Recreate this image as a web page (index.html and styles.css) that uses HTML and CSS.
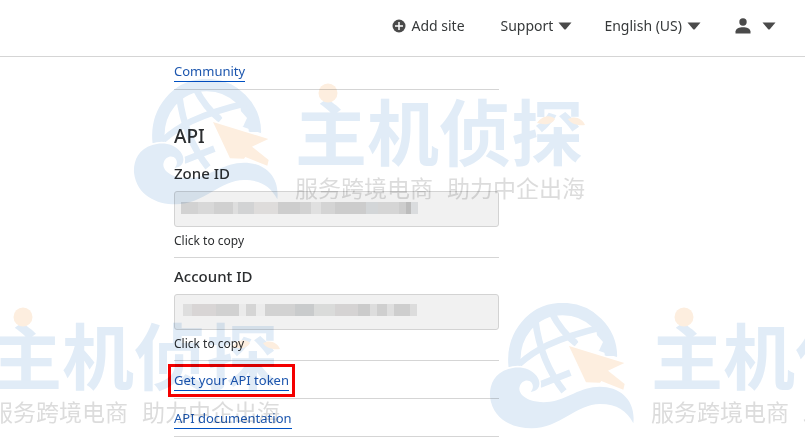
FILE: index.html
```html
<!DOCTYPE html>
<html lang="en">
<head>
<meta charset="utf-8">
<meta name="viewport" content="width=device-width, initial-scale=1">
<title>API</title>
<link rel="stylesheet" href="styles.css">
</head>
<body>
<svg class="defs" aria-hidden="true">
  <symbol id="caret" viewBox="0 0 14 8"><path d="M0.5 0.5H13.5L7.8 7.2Q7 8 6.2 7.2Z" fill="#4a4a4a"/></symbol>
  <symbol id="globe" viewBox="27 39 444 384">
    <g fill="none" stroke="#e1ecf7">
      <path d="M104 230C94 136 158 57 248 57C330 57 392 122 393 198" stroke-width="37"/>
      <path d="M118 222C160 184 220 146 365 112" stroke-width="19"/>
      <path d="M166 92C176 170 206 246 252 304" stroke-width="20"/>
      <path d="M215 68C236 110 258 136 290 162" stroke-width="20"/>
      <path d="M180 284L271 248" stroke-width="20"/>
    </g>
    <path d="M348 110L356 182L412 202L378 130Z" fill="#e1ecf7"/>
    <path d="M346 130L369 156L357 182L300 166L292 150Z" fill="#fff"/>
    <path d="M267 168L433 219L384 242L434 282L430 299L364 273L360 278L318 277Z" fill="#fdeedf" stroke="#fff" stroke-width="9" paint-order="stroke"/>
    <path d="M152 306C178 304 186 280 170 258C150 230 110 228 85 237C42 250 28 286 30 320C38 388 98 415 155 415C240 414 290 342 360 342C412 342 440 362 460 400C468 330 420 290 360 290C300 290 262 328 210 335C190 338 168 336 150 330C128 322 114 306 119 290C124 272 144 266 155 278C162 288 158 298 152 306Z" fill="#e1ecf7" stroke="#fff" stroke-width="10" paint-order="stroke"/>
  </symbol>
  <symbol id="accents" viewBox="0 0 290 50">
    <circle cx="33" cy="10" r="9.500"/>
    <path d="M242 40C248 32 256 32 260 36C257 42 249 42 242 40ZM273 36C280 32 288 36 290 42C283 43 276 41 273 36Z"/>
  </symbol>
</svg>

<header class="topbar">
  <nav class="menu" aria-label="Account">
    <a class="item add" href="#add"><svg class="plus" viewBox="0 0 14 14" aria-hidden="true"><circle cx="7" cy="7" r="6.500" fill="#4a4a4a"/><path d="M7 3V11M3 7H11" stroke="#fff" stroke-width="1.500"/></svg>Add site</a>
    <button class="item" type="button">Support<svg class="caret"><use href="#caret"/></svg></button>
    <button class="item" type="button">English (US)<svg class="caret"><use href="#caret"/></svg></button>
    <button class="item user" type="button" aria-label="User menu"><svg class="person" viewBox="0 0 16 16" aria-hidden="true"><circle cx="8" cy="4" r="3.700" fill="#4a4a4a"/><path d="M0.500 15.500V13.500C1 10.500 4 9.300 8 9.300S15 10.500 15.500 13.500V15.500Z" fill="#4a4a4a"/></svg><svg class="caret"><use href="#caret"/></svg></button>
  </nav>
</header>

<main class="sidebar">
  <div class="row first"><a class="link" href="#community">Community</a></div>
  <h2 class="heading">API</h2>
  <div class="field">
    <label class="label" for="zone">Zone ID</label>
    <input class="value zone" id="zone" type="text" readonly>
    <button class="copy" type="button">Click to copy</button>
  </div>
  <div class="field">
    <label class="label" for="account">Account ID</label>
    <input class="value account" id="account" type="text" readonly>
    <button class="copy" type="button">Click to copy</button>
  </div>
  <div class="row"><a class="link marked" href="#token">Get your API token</a></div>
  <div class="row"><a class="link" href="#docs">API documentation</a></div>
</main>

<div class="watermarks" lang="zh-CN">
  <div class="mark one"><svg class="globe"><use href="#globe"/></svg><div class="brand"><svg class="accents"><use href="#accents"/></svg><div class="name">主机侦探</div><div class="tagline"><span>服务跨境电商</span><span>助力中企出海</span></div></div></div>
  <div class="mark two"><svg class="globe"><use href="#globe"/></svg><div class="brand"><svg class="accents"><use href="#accents"/></svg><div class="name">主机侦探</div><div class="tagline"><span>服务跨境电商</span><span>助力中企出海</span></div></div></div>
  <div class="mark three"><svg class="globe"><use href="#globe"/></svg><div class="brand"><svg class="accents"><use href="#accents"/></svg><div class="name">主机侦探</div><div class="tagline"><span>服务跨境电商</span><span>助力中企出海</span></div></div></div>
</div>
</body>
</html>
```
FILE: styles.css
```css
* { box-sizing: border-box; }

body {
  margin: 0;
  position: relative;
  min-height: 100vh;
  overflow: hidden;
  background: #fff;
  color: #2c2e30;
  font-family: "Noto Sans", "Open Sans", sans-serif;
  font-size: 13px;
}

button {
  padding: 0;
  border: 0;
  background: none;
  color: inherit;
  font: inherit;
  cursor: pointer;
}

.defs { position: absolute; width: 0; height: 0; }

.topbar {
  display: flex;
  justify-content: flex-end;
  height: 57px;
  padding: 0 29px 5px 0;
  border-bottom: 1px solid #d5d5d5;
}

.menu { display: flex; align-items: center; gap: 32px; }

.item {
  display: flex;
  align-items: center;
  gap: 5px;
  color: #36393a;
  font-size: 14px;
  line-height: 20px;
  text-decoration: none;
}

.add { margin-right: 4px; }
.user { gap: 11px; margin-left: 2px; }
.plus { width: 14px; height: 14px; }
.caret { width: 14px; height: 8px; }
.person { width: 16px; height: 16px; }

.sidebar {
  width: 325px;
  max-width: calc(100% - 174px);
  margin-left: 174px;
}

.row {
  display: flex;
  padding: 9px 0 7px;
  border-bottom: 1px solid #d5d5d5;
}

.row.first { padding-top: 4px; }

.link {
  border-bottom: 1px solid #0051c3;
  color: #1c56ae;
  line-height: 20px;
  text-decoration: none;
}

.marked { outline: 3px solid #f40000; outline-offset: 3px; }

.heading {
  margin: 32px 0 5px;
  font-size: 19px;
  font-weight: 500;
  line-height: 28px;
}

.field {
  display: flex;
  flex-direction: column;
  align-items: flex-start;
  padding: 6px 0 7px;
  border-bottom: 1px solid #d5d5d5;
}

.label {
  margin-bottom: 6px;
  font-size: 15px;
  font-weight: 500;
  line-height: 24px;
}

.value {
  width: 100%;
  height: 36px;
  margin-bottom: 5px;
  border: 1px solid #d3d3d3;
  border-radius: 3px;
  background-color: #f1f1f1;
  background-repeat: no-repeat;
}

.zone {
  background-image: linear-gradient(90deg, #d2d2d2 0 7%, #d8d8d8 7% 14%, #d0d0d0 14% 22%, #dedede 22% 24%, #d2d3d4 24% 31%, #dedcdb 31% 41%, #cdcdcd 41% 50%, #d2d2d2 50% 55%, #e0e0e0 55% 59%, #d4d4d4 59% 65%, #cccccc 65% 78%, #d3d6d8 78% 83%, #d5d5d5 83% 92%, #cdcdcd 92% 95%, #bcbcbc 95% 97%, #dadcde 97%);
  background-position: 6px 10px;
  background-size: 237px 12px;
}

.account {
  background-image: linear-gradient(90deg, #dedede 0 4%, #d8d5d5 4% 14%, #d1d1d1 14% 24%, #ebebeb 24% 27%, #d5d5d5 27% 31%, #ececec 31% 35%, #d2d2d2 35% 48%, #c9cbcc 48% 56%, #dadbda 56% 65%, #d5d3d3 65% 75%, #cbcbcb 75% 80%, #dddddd 80% 83%, #cfcfcf 83% 87%, #dfdfdf 87% 90%, #cecece 90% 97%, #dcdcdc 97%);
  background-position: 8px 9px;
  background-size: 234px 12px;
}

.copy { font-size: 12px; line-height: 18px; }

.watermarks {
  position: absolute;
  inset: 0;
  overflow: hidden;
  pointer-events: none;
  mix-blend-mode: multiply;
}

.mark { position: absolute; display: flex; gap: 14px; }
.one { left: 133px; top: 79px; }
.two { left: -172px; top: 303px; }
.three { left: 489px; top: 303px; }
.globe { flex: none; width: 148px; height: 128px; }
.brand { position: relative; padding-top: 10px; }

.accents {
  position: absolute;
  left: 0;
  top: 4px;
  width: 290px;
  height: 50px;
  fill: #fdeedf;
}

.name {
  margin-bottom: 2px;
  color: #e1ecf7;
  font-family: "Noto Sans CJK SC", sans-serif;
  font-size: 72px;
  font-weight: 700;
  line-height: 80px;
  white-space: nowrap;
}

.tagline {
  display: flex;
  gap: 14px;
  color: #dcdcdc;
  font-family: "Noto Sans CJK SC", sans-serif;
  font-size: 23px;
  line-height: 32px;
  white-space: nowrap;
}
```
